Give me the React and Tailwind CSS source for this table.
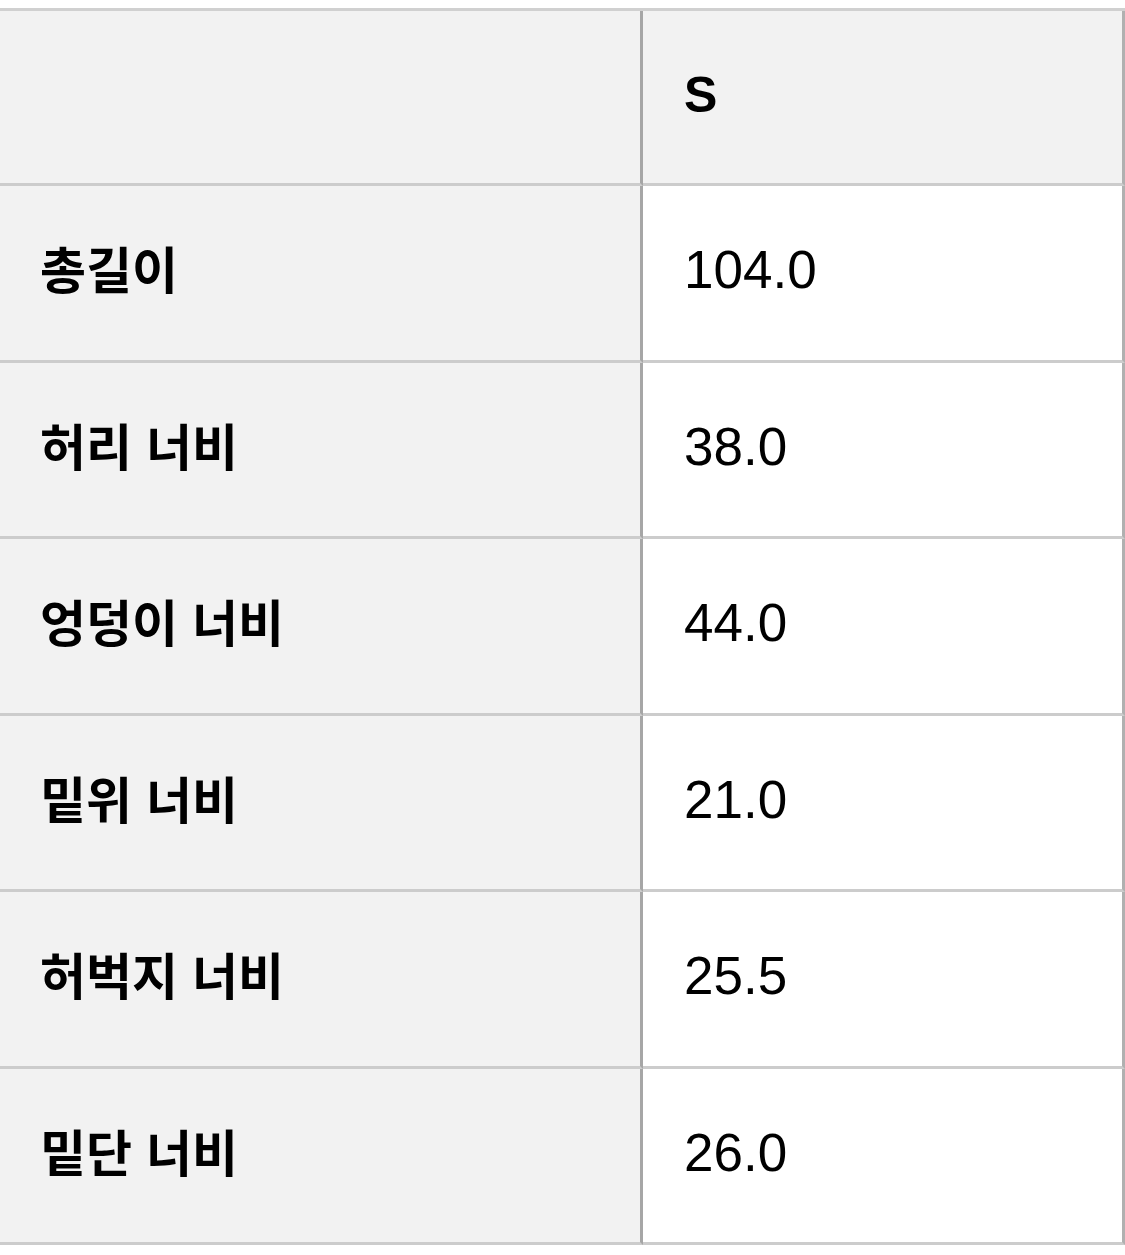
import React from "react";

const rows = [
  ["총길이", "104.0"],
  ["허리 너비", "38.0"],
  ["엉덩이 너비", "44.0"],
  ["밑위 너비", "21.0"],
  ["허벅지 너비", "25.5"],
  ["밑단 너비", "26.0"],
];

const App = () => {
  return (
    <div
      className="min-h-screen bg-white pt-[8px] text-black"
      style={{ fontFamily: '"Liberation Sans", "Noto Sans CJK KR", sans-serif' }}
    >
      <div className="w-[1125px] border-t-[3px] border-[#d0d0d0]">
        {/* header */}
        <div className="grid grid-cols-[643px_1fr]">
          <div className="box-border h-[175px] bg-[#f2f2f2] border-b-[3px] border-r-[3px] border-b-[#cccccc] border-r-[#a6a6a6]"></div>
          <div className="box-border h-[175px] bg-[#f2f2f2] border-b-[3px] border-r-[3px] border-b-[#cccccc] border-r-[#b0b0b0] flex items-center pl-[41px] pb-[4px] text-[50px] font-bold">
            S
          </div>
        </div>

        {rows.map(([label, value]) => (
          <div key={label} className="grid grid-cols-[643px_1fr]">
            <div className="box-border h-[176.5px] bg-[#f2f2f2] border-b-[3px] border-r-[3px] border-b-[#cccccc] border-r-[#a6a6a6] flex items-center pl-[40px] text-[50px] font-bold">
              {label}
            </div>
            <div className="box-border h-[176.5px] bg-white border-b-[3px] border-r-[3px] border-b-[#cccccc] border-r-[#b0b0b0] flex items-center pl-[41px] pb-[6px] text-[53px]">
              {value}
            </div>
          </div>
        ))}
      </div>
    </div>
  );
};

export default App;
